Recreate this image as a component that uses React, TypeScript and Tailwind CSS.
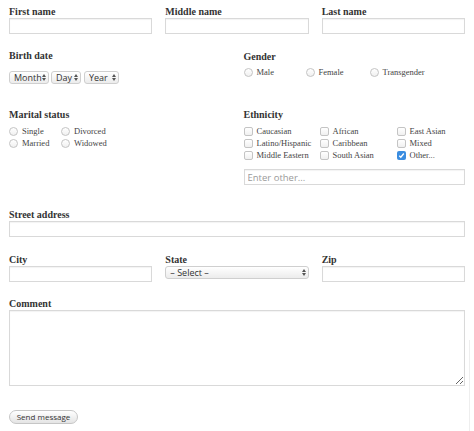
import React from 'react';

const serif = "font-['Georgia','Liberation_Serif',serif]";
const sans = "font-['Open_Sans','DejaVu_Sans',sans-serif]";

const Label = ({ children, className = '' }: { children: React.ReactNode; className?: string }) => (
  <div className={`${serif} text-[10px] font-bold leading-[12px] text-[#333] ${className}`}>{children}</div>
);

const TextInput = ({ placeholder, className = '' }: { placeholder?: string; className?: string }) => (
  <input
    type="text"
    placeholder={placeholder}
    className={`${sans} block h-[16px] w-full border border-[#d9d9d9] bg-white px-[3px] text-[9.5px] text-[#333] shadow-[inset_0_1px_1px_rgba(0,0,0,0.05)] outline-none placeholder:text-[#9a9a9a] ${className}`}
  />
);

const Arrows = () => (
  <svg width="4" height="7" viewBox="0 0 4 7" className="pointer-events-none absolute right-[3px] top-[3px]">
    <path d="M0 3L2 0L4 3Z" fill="#555" />
    <path d="M0 4L2 7L4 4Z" fill="#555" />
  </svg>
);

const Select = ({ label, className = '' }: { label: string; className?: string }) => (
  <div className={`relative h-[13px] ${className}`}>
    <select
      className={`${sans} block h-full w-full appearance-none rounded-[3px] border border-[#cfcfcf] bg-gradient-to-b from-white to-[#ececec] py-0 pl-[4px] pr-0 text-[9px] leading-[11px] text-[#333] outline-none`}
    >
      <option>{label}</option>
    </select>
    <Arrows />
  </div>
);

const Radio = ({ label, className = '' }: { label: string; className?: string }) => (
  <div className={`flex h-[12px] items-center gap-[4px] ${className}`}>
    <span className="block h-[9px] w-[9px] shrink-0 rounded-full border border-[#c4c4c4] bg-gradient-to-b from-white to-[#f0f0f0]" />
    <span className={`${serif} text-[8.5px] text-[#444]`}>{label}</span>
  </div>
);

const Check = ({ label, checked = false, className = '' }: { label: string; checked?: boolean; className?: string }) => (
  <div className={`flex h-[12px] items-center gap-[4px] ${className}`}>
    {checked ? (
      <span className="flex h-[9px] w-[9px] shrink-0 items-center justify-center rounded-[2px] bg-[#3b8de0]">
        <svg width="7" height="7" viewBox="0 0 7 7">
          <path d="M1.3 3.7L2.8 5.2L5.8 1.5" fill="none" stroke="#fff" strokeWidth="1.3" />
        </svg>
      </span>
    ) : (
      <span className="block h-[9px] w-[9px] shrink-0 rounded-[2px] border border-[#c4c4c4] bg-gradient-to-b from-white to-[#f0f0f0]" />
    )}
    <span className={`${serif} text-[8.5px] text-[#444]`}>{label}</span>
  </div>
);

export default function App() {
  return (
    <div className="relative min-h-[431px] w-[474px] bg-white px-[9px] pt-[6px]">
      {/* Names */}
      <div className="grid grid-cols-3 gap-x-[13px]">
        <div>
          <Label>First name</Label>
          <TextInput />
        </div>
        <div>
          <Label>Middle name</Label>
          <TextInput />
        </div>
        <div>
          <Label>Last name</Label>
          <TextInput />
        </div>
      </div>

      {/* Birth date / Gender */}
      <div className="mt-[16px] grid grid-cols-2 gap-x-[13px]">
        <div>
          <Label>Birth date</Label>
          <div className="mt-[9px] flex gap-[2px]">
            <Select label="Month" className="w-[40px]" />
            <Select label="Day" className="w-[30px]" />
            <Select label="Year" className="ml-[1px] w-[35px]" />
          </div>
        </div>
        <div className="pt-[1px]">
          <Label>Gender</Label>
          <div className="mt-[3px] flex">
            <Radio label="Male" className="w-[62px]" />
            <Radio label="Female" className="w-[64px]" />
            <Radio label="Transgender" />
          </div>
        </div>
      </div>

      {/* Marital status / Ethnicity */}
      <div className="mt-[25px] grid grid-cols-2 gap-x-[13px]">
        <div>
          <Label>Marital status</Label>
          <div className="mt-[4px] grid w-[110px] grid-cols-[52px_1fr]">
            <Radio label="Single" />
            <Radio label="Divorced" />
            <Radio label="Married" />
            <Radio label="Widowed" />
          </div>
        </div>
        <div>
          <Label>Ethnicity</Label>
          <div className="mt-[4px] grid grid-cols-[76px_77px_1fr]">
            <Check label="Caucasian" />
            <Check label="African" />
            <Check label="East Asian" />
            <Check label="Latino/Hispanic" />
            <Check label="Caribbean" />
            <Check label="Mixed" />
            <Check label="Middle Eastern" />
            <Check label="South Asian" />
            <Check label="Other..." checked />
          </div>
          <TextInput placeholder="Enter other..." className="mt-[8px]" />
        </div>
      </div>

      {/* Street address */}
      <div className="mt-[24px]">
        <Label>Street address</Label>
        <TextInput />
      </div>

      {/* City / State / Zip */}
      <div className="mt-[17px] grid grid-cols-3 gap-x-[13px]">
        <div>
          <Label className="leading-[11px]">City</Label>
          <TextInput />
        </div>
        <div>
          <Label className="leading-[11px]">State</Label>
          <Select label="– Select –" />
        </div>
        <div>
          <Label className="leading-[11px]">Zip</Label>
          <TextInput />
        </div>
      </div>

      {/* Comment */}
      <div className="mt-[16px]">
        <Label>Comment</Label>
        <textarea className="block h-[76px] w-full border border-[#d9d9d9] bg-white shadow-[inset_0_1px_1px_rgba(0,0,0,0.05)] outline-none" />
      </div>

      <button
        className={`${sans} mt-[24px] block h-[14px] w-[69px] rounded-full border border-[#c6c6c6] bg-gradient-to-b from-white to-[#e4e4e4] text-[8px] leading-[12px] text-[#333]`}
      >
        Send message
      </button>

      <div className="absolute right-[4px] top-[340px] h-[91px] w-px bg-[#eeeeee]" />
    </div>
  );
}
